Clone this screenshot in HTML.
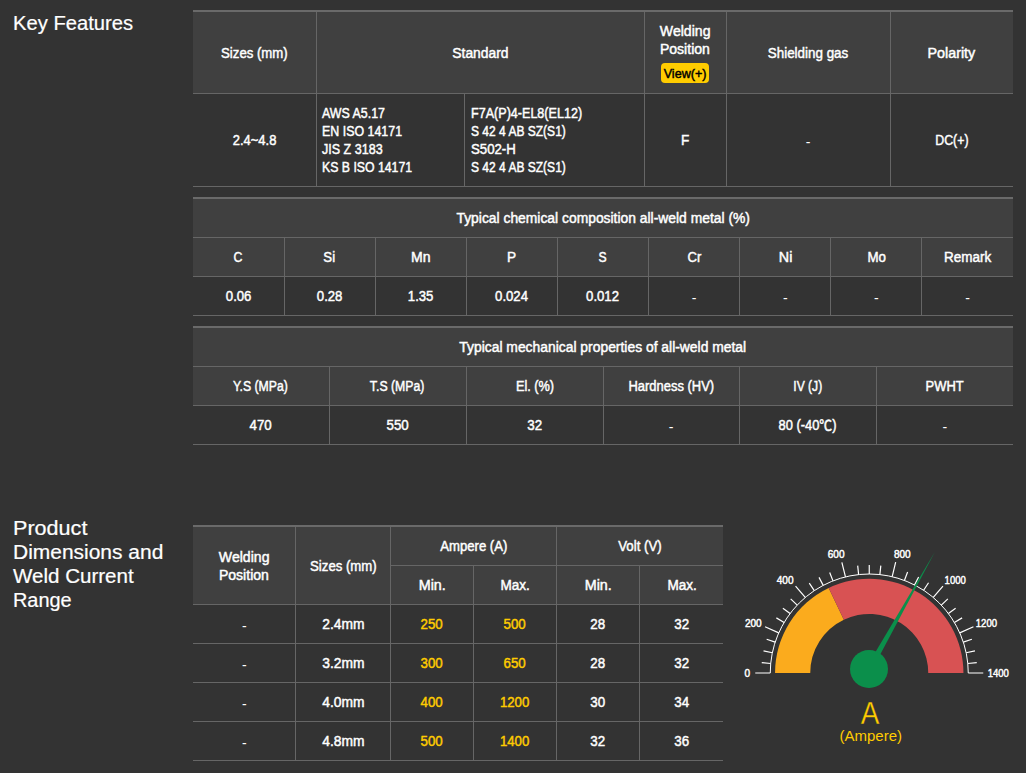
<!DOCTYPE html>
<html lang="en">
<head>
<meta charset="utf-8">
<title>Key Features</title>
<style>
html,body{margin:0;padding:0;}
body{width:1026px;height:773px;overflow:hidden;position:relative;background:#333;color:#fff;
 font-family:"Liberation Sans","Noto Sans CJK KR",sans-serif;font-size:14px;line-height:18px;}
h3{position:absolute;left:13px;margin:0;font-weight:normal;-webkit-text-stroke:.2px currentColor;font-size:20px;line-height:24px;color:#fff;white-space:nowrap;}
h3 .s{display:block;transform-origin:0 50%;}
table{position:absolute;left:193px;border-collapse:collapse;table-layout:fixed;border-top:2px solid #6a6a6a;}
th,td{padding:10px 2px;border:1px solid #666;text-align:center;vertical-align:middle;font-weight:normal;line-height:18px;font-size:14px;white-space:nowrap;-webkit-text-stroke:.45px currentColor;}
th{background:#404040;}
tr>*:first-child{border-left:none;}
tr>*:last-child{border-right:none;}
table tr:first-child>*{border-top:none;}
.s{display:inline-block;white-space:nowrap;transform-origin:50% 50%;}
td.l{text-align:left;padding-left:5px;}
td.l .s{display:block;transform-origin:0 50%;}
.y{color:#fc0;}
.t4 th,.t4 td{padding-left:3px;}
.d1 .s{position:relative;top:1px;}
.btn{display:block;width:48px;height:20px;margin:5px auto 0;background:#fc0;color:#000;border-radius:4px;font-size:13px;line-height:20px;text-align:center;}
</style>
</head>
<body>
<h3 style="top:10.6px"><span class="s" style="transform:scaleX(1.009)">Key Features</span></h3>
<table style="top:10px;width:820px">
<colgroup><col style="width:123px"><col style="width:148px"><col style="width:180px"><col style="width:82px"><col style="width:164px"><col style="width:123px"></colgroup>
<tr style="height:82px" class="d1"><th><span class="s" style="transform:scaleX(0.941)">Sizes (mm)</span></th><th colspan="2"><span class="s" style="transform:scaleX(0.990)">Standard</span></th><th class="wp" style="padding:10px 0 9px;vertical-align:top"><span class="s" style="transform:scaleX(1.005);top:0">Welding</span><br><span class="s" style="transform:scaleX(1.002);top:0">Position</span><span class="btn"><span class="s" style="transform:scaleX(0.970);top:1px">View(+)</span></span></th><th><span class="s" style="transform:scaleX(0.957)">Shielding gas</span></th><th><span class="s" style="transform:scaleX(1.023)">Polarity</span></th></tr>
<tr style="height:93px"><td><span class="s" style="transform:scaleX(0.927)">2.4~4.8</span></td><td class="l"><span class="s" style="transform:scaleX(0.886)">AWS A5.17</span><span class="s" style="transform:scaleX(0.887)">EN ISO 14171</span><span class="s" style="transform:scaleX(0.895)">JIS Z 3183</span><span class="s" style="transform:scaleX(0.877)">KS B ISO 14171</span></td><td class="l" style="padding-left:6px"><span class="s" style="transform:scaleX(0.898)">F7A(P)4-EL8(EL12)</span><span class="s" style="transform:scaleX(0.858)">S 42 4 AB SZ(S1)</span><span class="s" style="transform:scaleX(0.944)">S502-H</span><span class="s" style="transform:scaleX(0.858)">S 42 4 AB SZ(S1)</span></td><td><span class="s" style="transform:scaleX(0.971)">F</span></td><td><span class="s" style="position:relative;top:2px;-webkit-text-stroke:0">-</span></td><td><span class="s" style="transform:scaleX(0.882)">DC(+)</span></td></tr>
</table>

<table style="top:197px;width:820px">
<tr style="height:39px"><th colspan="9"><span class="s" style="transform:scaleX(0.990)">Typical chemical composition all-weld metal (%)</span></th></tr>
<tr style="height:39px"><th><span class="s" style="transform:scaleX(0.880)">C</span></th><th><span class="s" style="transform:scaleX(0.941)">Si</span></th><th><span class="s" style="transform:scaleX(1.003)">Mn</span></th><th><span class="s" style="transform:scaleX(0.975)">P</span></th><th><span class="s" style="transform:scaleX(0.867)">S</span></th><th><span class="s" style="transform:scaleX(0.936)">Cr</span></th><th><span class="s" style="transform:scaleX(1.022)">Ni</span></th><th><span class="s" style="transform:scaleX(0.950)">Mo</span></th><th><span class="s" style="transform:scaleX(0.964)">Remark</span></th></tr>
<tr style="height:39px"><td><span class="s" style="transform:scaleX(0.941)">0.06</span></td><td><span class="s" style="transform:scaleX(0.941)">0.28</span></td><td><span class="s" style="transform:scaleX(0.938)">1.35</span></td><td><span class="s" style="transform:scaleX(0.939)">0.024</span></td><td><span class="s" style="transform:scaleX(0.939)">0.012</span></td><td><span class="s" style="position:relative;top:2px;-webkit-text-stroke:0">-</span></td><td><span class="s" style="position:relative;top:2px;-webkit-text-stroke:0">-</span></td><td><span class="s" style="position:relative;top:2px;-webkit-text-stroke:0">-</span></td><td><span class="s" style="position:relative;top:2px;-webkit-text-stroke:0">-</span></td></tr>
</table>

<table style="top:326px;width:820px">
<colgroup><col style="width:136px"><col style="width:137px"><col style="width:137px"><col style="width:136px"><col style="width:137px"><col style="width:137px"></colgroup>
<tr style="height:39px"><th colspan="6"><span class="s" style="transform:scaleX(0.991)">Typical mechanical properties of all-weld metal</span></th></tr>
<tr style="height:39px"><th><span class="s" style="transform:scaleX(0.875)">Y.S (MPa)</span></th><th><span class="s" style="transform:scaleX(0.876)">T.S (MPa)</span></th><th><span class="s" style="transform:scaleX(0.908)">El. (%)</span></th><th><span class="s" style="transform:scaleX(0.925)">Hardness (HV)</span></th><th><span class="s" style="transform:scaleX(0.864)">IV (J)</span></th><th><span class="s" style="transform:scaleX(0.926)">PWHT</span></th></tr>
<tr style="height:39px"><td><span class="s" style="transform:scaleX(0.949)">470</span></td><td><span class="s" style="transform:scaleX(0.949)">550</span></td><td><span class="s" style="transform:scaleX(0.955)">32</span></td><td><span class="s" style="position:relative;top:2px;-webkit-text-stroke:0">-</span></td><td><span class="s" style="transform:scaleX(0.918)">80 (-40℃)</span></td><td><span class="s" style="position:relative;top:2px;-webkit-text-stroke:0">-</span></td></tr>
</table>

<h3 style="top:515.9px"><span class="s" style="transform:scaleX(1.079)">Product</span><span class="s" style="transform:scaleX(1.048)">Dimensions and</span><span class="s" style="transform:scaleX(1.027)">Weld Current</span><span class="s" style="transform:scaleX(0.995)">Range</span></h3>

<table class="t4" style="top:525px;width:530px">
<colgroup><col style="width:102px"><col style="width:95px"><col style="width:83px"><col style="width:83px"><col style="width:83px"><col style="width:84px"></colgroup>
<tr style="height:39px"><th rowspan="2"><span class="s" style="transform:scaleX(1.005)">Welding</span><br><span class="s" style="transform:scaleX(1.002)">Position</span></th><th rowspan="2"><span class="s" style="transform:scaleX(0.941)">Sizes (mm)</span></th><th colspan="2"><span class="s" style="transform:scaleX(0.938)">Ampere (A)</span></th><th colspan="2"><span class="s" style="transform:scaleX(0.945)">Volt (V)</span></th></tr>
<tr style="height:39px"><th><span class="s" style="transform:scaleX(1.022)">Min.</span></th><th><span class="s" style="transform:scaleX(0.969)">Max.</span></th><th><span class="s" style="transform:scaleX(1.022)">Min.</span></th><th><span class="s" style="transform:scaleX(0.969)">Max.</span></th></tr>
<tr style="height:39px"><td><span class="s" style="position:relative;top:2px;-webkit-text-stroke:0">-</span></td><td><span class="s" style="transform:scaleX(0.987)">2.4mm</span></td><td class="y"><span class="s" style="transform:scaleX(0.949)">250</span></td><td class="y"><span class="s" style="transform:scaleX(0.949)">500</span></td><td><span class="s" style="transform:scaleX(0.955)">28</span></td><td><span class="s" style="transform:scaleX(0.955)">32</span></td></tr>
<tr style="height:39px"><td><span class="s" style="position:relative;top:2px;-webkit-text-stroke:0">-</span></td><td><span class="s" style="transform:scaleX(0.987)">3.2mm</span></td><td class="y"><span class="s" style="transform:scaleX(0.949)">300</span></td><td class="y"><span class="s" style="transform:scaleX(0.949)">650</span></td><td><span class="s" style="transform:scaleX(0.955)">28</span></td><td><span class="s" style="transform:scaleX(0.955)">32</span></td></tr>
<tr style="height:39px"><td><span class="s" style="position:relative;top:2px;-webkit-text-stroke:0">-</span></td><td><span class="s" style="transform:scaleX(0.987)">4.0mm</span></td><td class="y"><span class="s" style="transform:scaleX(0.949)">400</span></td><td class="y"><span class="s" style="transform:scaleX(0.943)">1200</span></td><td><span class="s" style="transform:scaleX(0.955)">30</span></td><td><span class="s" style="transform:scaleX(0.955)">34</span></td></tr>
<tr style="height:39px"><td><span class="s" style="position:relative;top:2px;-webkit-text-stroke:0">-</span></td><td><span class="s" style="transform:scaleX(0.987)">4.8mm</span></td><td class="y"><span class="s" style="transform:scaleX(0.949)">500</span></td><td class="y"><span class="s" style="transform:scaleX(0.943)">1400</span></td><td><span class="s" style="transform:scaleX(0.955)">32</span></td><td><span class="s" style="transform:scaleX(0.955)">36</span></td></tr>
</table>

<svg width="1026" height="773" viewBox="0 0 1026 773" style="position:absolute;left:0;top:0">
<path d="M775.05,673.00 A94.2,94.2 0 0 1 828.70,587.98 L843.85,619.75 A59.0,59.0 0 0 0 810.25,673.00 Z" fill="#fbab1d"/>
<path d="M828.70,587.98 A94.2,94.2 0 0 1 963.45,673.00 L928.25,673.00 A59.0,59.0 0 0 0 843.85,619.75 Z" fill="#d85253"/>
<path d="M770.25,673.00 A99.0,99.0 0 0 1 968.25,673.00" fill="none" stroke="#fff" stroke-width="1"/>
<path d="M770.25,673.00L755.25,673.00M770.71,663.51L761.75,662.65M772.34,652.75L763.53,650.91M775.20,642.08L766.65,639.27M778.76,632.84L765.05,626.76M784.11,622.49L776.37,617.89M790.08,613.56L782.88,608.15M797.20,605.10L790.65,598.93M805.24,597.47L795.55,586.03M814.28,590.67L809.28,583.18M823.20,585.36L819.01,577.40M832.98,580.88L829.69,572.51M845.47,576.90L841.86,562.34M858.64,574.57L857.68,565.62M869.25,574.00L869.25,565.00M879.86,574.57L880.82,565.62M892.19,576.70L895.67,562.10M904.41,580.45L907.60,572.04M914.50,584.95L918.62,576.94M923.60,590.26L928.54,582.73M933.26,597.47L942.95,586.03M941.30,605.10L947.85,598.93M948.42,613.56L955.62,608.15M954.39,622.49L962.13,617.89M959.74,632.84L973.45,626.76M963.30,642.08L971.85,639.27M966.16,652.75L974.97,650.91M967.79,663.51L976.75,662.65M968.25,673.00L983.25,673.00" fill="none" stroke="#fff" stroke-width="1.2"/>
<g font-family="'Liberation Sans',sans-serif" font-size="10.4" fill="#fff" stroke="#fff" stroke-width="0.45" text-anchor="middle">
<text transform="translate(747.3 676.7) scale(0.97 1)">0</text>
<text transform="translate(753.3 626.9) scale(0.97 1)">200</text>
<text transform="translate(785.1 584.1) scale(0.97 1)">400</text>
<text transform="translate(836.1 558.4) scale(0.97 1)">600</text>
<text transform="translate(902.3 557.7) scale(0.97 1)">800</text>
<text transform="translate(955.2 583.8) scale(0.92 1)">1000</text>
<text transform="translate(986.4 626.8) scale(0.92 1)">1200</text>
<text transform="translate(998.3 676.7) scale(0.92 1)">1400</text>
</g>
<path d="M866.30,667.48 L934.97,551.68 L871.70,670.52 Z" fill="#0b8f4b"/>
<circle cx="869.0" cy="669.0" r="19" fill="#0b8f4b"/>
<text x="870" y="724" font-family="'Liberation Sans',sans-serif" font-size="31" fill="#fc0" stroke="#333" stroke-width="0.3" text-anchor="middle" transform="translate(870 0) scale(0.9 1) translate(-870 0)">A</text>
<text x="870.8" y="741.2" font-family="'Liberation Sans',sans-serif" font-size="15" fill="#fc0" text-anchor="middle">(Ampere)</text>
</svg>
</body>
</html>
